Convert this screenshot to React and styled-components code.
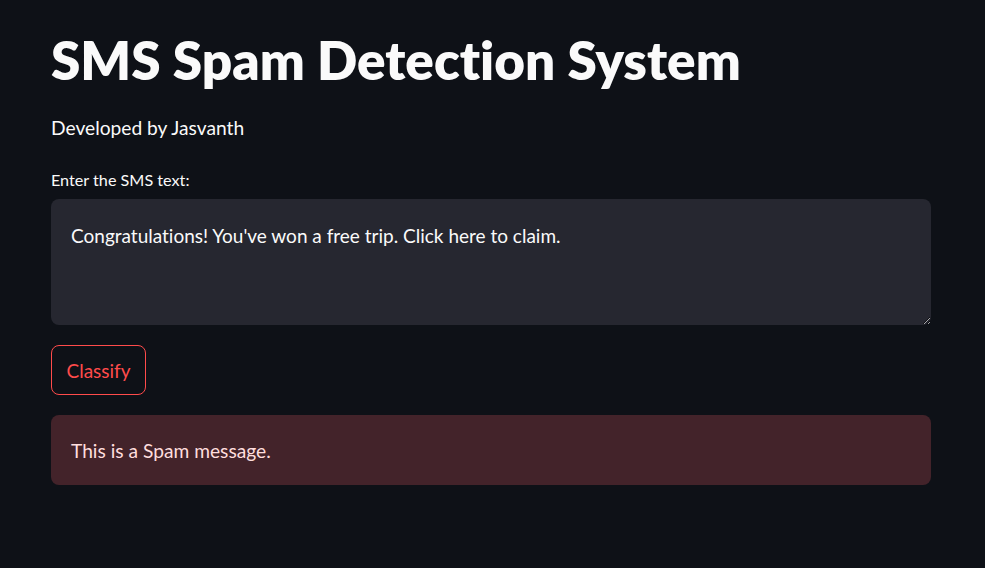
import React, { useState } from 'react';
import styled, { createGlobalStyle } from 'styled-components';

const GlobalStyle = createGlobalStyle`
  html, body {
    margin: 0;
    padding: 0;
    background: #0e1117;
    color: #fafafa;
    font-family: Lato, "Noto Sans", sans-serif;
    font-variant-ligatures: none;
  }
`;

const App = () => {
  const [text, setText] = useState(
    "Congratulations! You've won a free trip. Click here to claim."
  );

  return (
    <Page>
      <GlobalStyle />
      <Main>
        <Title>SMS Spam Detection System</Title>
        <Byline>Developed by Jasvanth</Byline>
        <Field>
          <Label htmlFor="sms">Enter the SMS text:</Label>
          <TextArea id="sms" value={text} onChange={(e) => setText(e.target.value)} />
        </Field>
        <Button>Classify</Button>
        <Alert>This is a Spam message.</Alert>
      </Main>
    </Page>
  );
};

const Page = styled.div`
  min-height: 568px;
  background: #0e1117;
`;

const Main = styled.main`
  width: 880px;
  padding: 24px 0 0 51px;
  display: flex;
  flex-direction: column;
`;

const Title = styled.h1`
  margin: 0;
  font-size: 53px;
  font-weight: 800;
  line-height: 72px;
  color: #fafafa;
`;

const Byline = styled.p`
  margin: 17px 0 0;
  font-size: 19.2px;
  line-height: 30px;
`;

const Field = styled.div`
  margin-top: 26px;
  display: flex;
  flex-direction: column;
  gap: 8px;
`;

const Label = styled.label`
  font-size: 16.2px;
  line-height: 22px;
`;

const TextArea = styled.textarea`
  box-sizing: border-box;
  width: 880px;
  height: 126px;
  padding: 23px 20px;
  border: none;
  border-radius: 8px;
  background: #262730;
  color: #fafafa;
  font-family: inherit;
  font-size: 19px;
  line-height: 28px;
  font-variant-ligatures: none;
  resize: vertical;
  outline: none;
`;

const Button = styled.button`
  align-self: flex-start;
  margin-top: 20px;
  width: 95px;
  height: 50px;
  border: 1px solid #ff4b4b;
  border-radius: 8px;
  background: transparent;
  color: #ff4b4b;
  font-family: inherit;
  font-size: 19px;
  cursor: pointer;
`;

const Alert = styled.div`
  box-sizing: border-box;
  margin-top: 20px;
  height: 70px;
  padding: 0 20px;
  display: flex;
  align-items: center;
  border-radius: 8px;
  background: #43232a;
  color: #ffdede;
  font-size: 19.2px;
`;

export default App;
